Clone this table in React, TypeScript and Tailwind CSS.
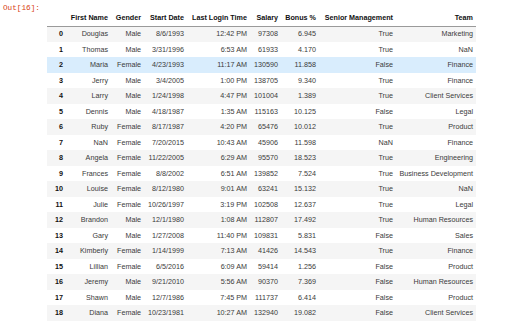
import React from "react";

const rows: string[][] = [
  ["0", "Douglas", "Male", "8/6/1993", "12:42 PM", "97308", "6.945", "True", "Marketing"],
  ["1", "Thomas", "Male", "3/31/1996", "6:53 AM", "61933", "4.170", "True", "NaN"],
  ["2", "Maria", "Female", "4/23/1993", "11:17 AM", "130590", "11.858", "False", "Finance"],
  ["3", "Jerry", "Male", "3/4/2005", "1:00 PM", "138705", "9.340", "True", "Finance"],
  ["4", "Larry", "Male", "1/24/1998", "4:47 PM", "101004", "1.389", "True", "Client Services"],
  ["5", "Dennis", "Male", "4/18/1987", "1:35 AM", "115163", "10.125", "False", "Legal"],
  ["6", "Ruby", "Female", "8/17/1987", "4:20 PM", "65476", "10.012", "True", "Product"],
  ["7", "NaN", "Female", "7/20/2015", "10:43 AM", "45906", "11.598", "NaN", "Finance"],
  ["8", "Angela", "Female", "11/22/2005", "6:29 AM", "95570", "18.523", "True", "Engineering"],
  ["9", "Frances", "Female", "8/8/2002", "6:51 AM", "139852", "7.524", "True", "Business Development"],
  ["10", "Louise", "Female", "8/12/1980", "9:01 AM", "63241", "15.132", "True", "NaN"],
  ["11", "Julie", "Female", "10/26/1997", "3:19 PM", "102508", "12.637", "True", "Legal"],
  ["12", "Brandon", "Male", "12/1/1980", "1:08 AM", "112807", "17.492", "True", "Human Resources"],
  ["13", "Gary", "Male", "1/27/2008", "11:40 PM", "109831", "5.831", "False", "Sales"],
  ["14", "Kimberly", "Female", "1/14/1999", "7:13 AM", "41426", "14.543", "True", "Finance"],
  ["15", "Lillian", "Female", "6/5/2016", "6:09 AM", "59414", "1.256", "False", "Product"],
  ["16", "Jeremy", "Male", "9/21/2010", "5:56 AM", "90370", "7.369", "False", "Human Resources"],
  ["17", "Shawn", "Male", "12/7/1986", "7:45 PM", "111737", "6.414", "False", "Product"],
  ["18", "Diana", "Female", "10/23/1981", "10:27 AM", "132940", "19.082", "False", "Client Services"],
];

const header = ["", "First Name", "Gender", "Start Date", "Last Login Time", "Salary", "Bonus %", "Senior Management", "Team"];

export default function App() {
  return (
    <div className="w-[512px] h-[323px] bg-white overflow-hidden flex font-['Liberation_Sans',Arial,sans-serif]">
      <div className="w-[47px] pl-[3px] pt-[3px] text-[7.7px] leading-[10px] text-[#d84315] font-['Liberation_Mono',monospace]">
        Out[16]:
      </div>
      <div className="pt-[10px]">
        <table className="table-fixed border-collapse w-[429px] text-[7.2px]">
          <colgroup>
            <col className="w-[19px]" />
            <col className="w-[45px]" />
            <col className="w-[33px]" />
            <col className="w-[43px]" />
            <col className="w-[63px]" />
            <col className="w-[31px]" />
            <col className="w-[38px]" />
            <col className="w-[77px]" />
            <col className="w-[80px]" />
          </colgroup>
          <thead>
            <tr className="h-[16px] border-b border-[#9a9a9a]">
              {header.map((h, i) => (
                <th key={i} className="p-0 pr-[3px] text-right font-bold text-[#111] whitespace-nowrap leading-none">
                  {h}
                </th>
              ))}
            </tr>
          </thead>
          <tbody>
            {rows.map((r, ri) => (
              <tr
                key={ri}
                className={
                  ri === 2 ? "h-[15.5px] bg-[#d9edfd]" : ri % 2 === 0 ? "h-[15.5px] bg-[#f5f5f5]" : "h-[15.5px] bg-white"
                }
              >
                {r.map((c, ci) =>
                  ci === 0 ? (
                    <th key={ci} className="p-0 pr-[3px] text-right font-bold text-[#111] leading-none">
                      {c}
                    </th>
                  ) : (
                    <td key={ci} className="p-0 pr-[3px] text-right text-[#3a3a3a] whitespace-nowrap leading-none">
                      {c}
                    </td>
                  )
                )}
              </tr>
            ))}
          </tbody>
        </table>
      </div>
    </div>
  );
}
